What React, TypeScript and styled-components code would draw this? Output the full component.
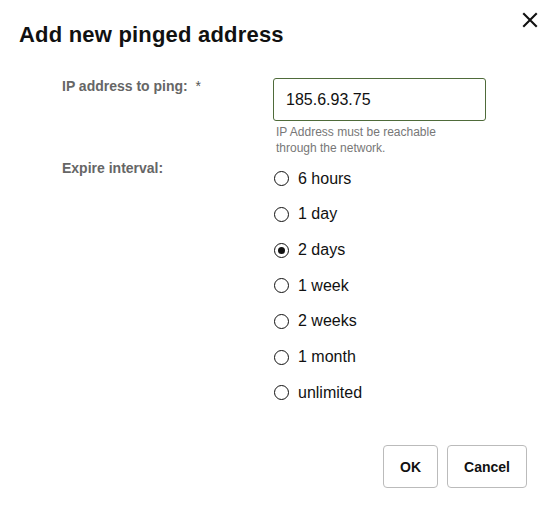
import { useState } from 'react'
import styled, { createGlobalStyle } from 'styled-components'

const intervals = ['6 hours', '1 day', '2 days', '1 week', '2 weeks', '1 month', 'unlimited']

export default function App() {
  const [ip, setIp] = useState('185.6.93.75')
  const [expire, setExpire] = useState('2 days')

  return (
    <>
      <GlobalStyle />
      <Dialog>
        <CloseButton aria-label="Close">
          <svg width="16" height="16" viewBox="0 0 16 16">
            <path d="M2 2 L14 14 M14 2 L2 14" stroke="#111" strokeWidth="2.1" strokeLinecap="square" />
          </svg>
        </CloseButton>
        <Title>Add new pinged address</Title>

        <Form>
          <Label>
            IP address to ping:&nbsp;&nbsp;<span>*</span>
          </Label>
          <Field>
            <TextInput value={ip} onChange={(e) => setIp(e.target.value)} autoFocus />
            <Help>
              IP Address must be reachable
              <br />
              through the network.
            </Help>
          </Field>

          <Label>Expire interval:</Label>
          <RadioList>
            {intervals.map((item) => (
              <RadioRow key={item} onClick={() => setExpire(item)}>
                <RadioDot $checked={expire === item} />
                {item}
              </RadioRow>
            ))}
          </RadioList>
        </Form>

        <Footer>
          <Button>OK</Button>
          <Button>Cancel</Button>
        </Footer>
      </Dialog>
    </>
  )
}

const GlobalStyle = createGlobalStyle`
  html, body {
    margin: 0;
    padding: 0;
    background: #fff;
  }
  body {
    font-family: "Liberation Sans", Arial, sans-serif;
    color: #111;
  }
`

const Dialog = styled.div`
  position: relative;
  box-sizing: border-box;
  width: 541px;
  height: 506px;
  display: flex;
  flex-direction: column;
  background: #fff;
  padding: 23px 14px 18px 19px;
`

const CloseButton = styled.button`
  position: absolute;
  top: 10px;
  right: 1px;
  width: 20px;
  height: 20px;
  padding: 0;
  border: none;
  background: none;
  display: flex;
  align-items: center;
  justify-content: center;
  cursor: pointer;
`

const Title = styled.h2`
  margin: 0;
  font-size: 22px;
  line-height: 24px;
  font-weight: 700;
  letter-spacing: 0.2px;
  color: #111;
`

const Form = styled.div`
  display: grid;
  grid-template-columns: 211px 1fr;
  row-gap: 4px;
  margin-top: 31px;
  padding-left: 43px;
  align-items: start;
`

const Label = styled.div`
  font-size: 14px;
  line-height: 16px;
  font-weight: 700;
  color: #666;

  > span {
    font-weight: 400;
    color: #555;
  }
`

const Field = styled.div`
  display: flex;
  flex-direction: column;
`

const TextInput = styled.input`
  box-sizing: border-box;
  width: 213px;
  height: 43px;
  border: 1px solid #4f6b3a;
  border-radius: 3px;
  padding: 0 12px;
  font-family: "Liberation Sans", Arial, sans-serif;
  font-size: 16px;
  color: #111;
  outline: none;
  caret-color: #111;
`

const Help = styled.div`
  padding: 3px 0 0 3px;
  font-size: 12px;
  line-height: 16px;
  color: #777;
`

const RadioList = styled.div`
  display: flex;
  flex-direction: column;
  padding-top: 1px;
`

const RadioRow = styled.label`
  display: flex;
  align-items: center;
  gap: 9px;
  height: 35.67px;
  font-size: 16px;
  color: #111;
  cursor: pointer;
`

const RadioDot = styled.span<{ $checked: boolean }>`
  box-sizing: border-box;
  width: 15px;
  height: 15px;
  margin-left: 1px;
  border: 1.6px solid #111;
  border-radius: 50%;
  display: flex;
  align-items: center;
  justify-content: center;

  &::after {
    content: '';
    width: 7px;
    height: 7px;
    border-radius: 50%;
    background: #111;
    display: ${({ $checked }) => ($checked ? 'block' : 'none')};
  }
`

const Footer = styled.div`
  margin-top: auto;
  display: flex;
  justify-content: flex-end;
  gap: 9px;
`

const Button = styled.button`
  box-sizing: border-box;
  height: 43px;
  padding: 0 16px;
  border: 1px solid #bbb;
  border-radius: 4px;
  background: #fff;
  font-family: "Liberation Sans", Arial, sans-serif;
  font-size: 14px;
  font-weight: 700;
  color: #111;
  cursor: pointer;
`
